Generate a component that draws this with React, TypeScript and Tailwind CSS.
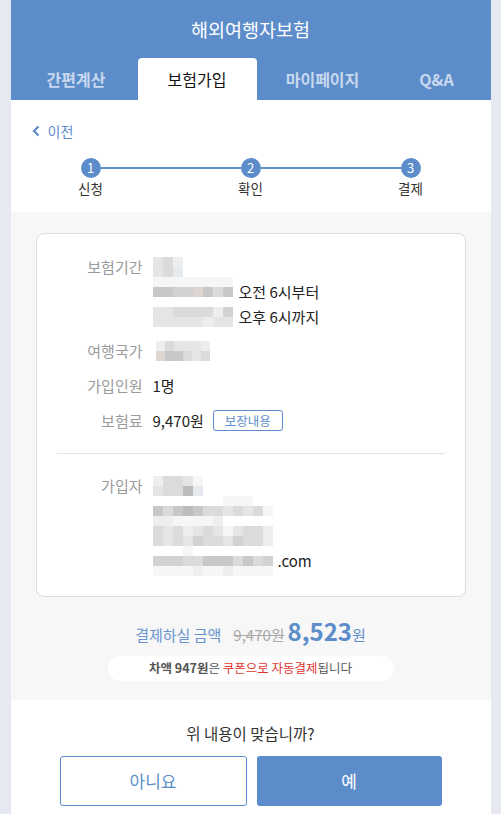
import React from "react";

const PAL: Record<string, string> = {
  w: "bg-transparent",
  "0": "bg-[#f6f6f6]",
  "1": "bg-[#eeeeee]",
  "2": "bg-[#e5e5e6]",
  "3": "bg-[#dbdbdc]",
  "4": "bg-[#d2d2d3]",
  "5": "bg-[#c9c8c9]",
  "6": "bg-[#bdbcbc]",
  "7": "bg-[#e6eaee]",
  "8": "bg-[#ddd5d2]",
};

function Mosaic({ rows, cell = "w-[10px]" }: { rows: string[]; cell?: string }) {
  return (
    <div className="flex flex-col shrink-0">
      {rows.map((r, i) => (
        <div key={i} className="flex h-[10px]">
          {r.split("").map((c, j) => (
            <div key={j} className={`${cell} h-[10px] ${PAL[c]}`} />
          ))}
        </div>
      ))}
    </div>
  );
}

function Label({ children }: { children: React.ReactNode }) {
  return (
    <div className="w-[106px] shrink-0 text-right text-[15px] leading-[20px] text-[#9a9a9a]">
      {children}
    </div>
  );
}

export default function App() {
  const font = { fontFamily: '"Noto Sans CJK KR", "Noto Sans", sans-serif' };
  return (
    <div className="min-h-screen bg-[#e6e9f1] flex justify-center" style={font}>
      <div className="w-[480px] bg-white flex flex-col">
        {/* Header */}
        <div className="bg-[#5c8dca]">
          <div className="h-[58px] flex items-center justify-center text-white text-[18.5px] pt-[1px]">
            해외여행자보험
          </div>
          <div className="h-[42px] grid grid-cols-[127px_119px_132px_102px]">
            <div className="flex items-center justify-center text-[16px] font-bold text-[#c8d8ee] pl-[4px]">간편계산</div>
            <div className="flex items-center justify-center text-[16px] text-[#111111] bg-white rounded-t-[4px]">보험가입</div>
            <div className="flex items-center justify-center text-[16px] font-bold text-[#c8d8ee]">마이페이지</div>
            <div className="flex items-center justify-center text-[16px] font-bold text-[#c8d8ee] pr-[6px]">Q&amp;A</div>
          </div>
        </div>

        {/* Back + steps */}
        <div className="h-[112px] pt-[22px]">
          <div className="flex items-center h-[18px] pl-[21px] gap-[8px] text-[14px] text-[#5c8dca]">
            <svg width="8" height="12" viewBox="0 0 8 12">
              <polyline points="6.5,1.5 2,6 6.5,10.5" fill="none" stroke="#5c8dca" strokeWidth="2.2" />
            </svg>
            <span className="leading-[18px]">이전</span>
          </div>
          <div className="flex items-center px-[70px] mt-[18px]">
            {["1", "2", "3"].map((n, i) => (
              <React.Fragment key={n}>
                {i > 0 && <div className="flex-1 h-[2px] bg-[#5c8dca]" />}
                <div className="w-[20px] h-[20px] rounded-full bg-[#5c8dca] text-white text-[13px] flex items-center justify-center">
                  {n}
                </div>
              </React.Fragment>
            ))}
          </div>
          <div className="flex justify-between px-[60px] mt-[2px]">
            {["신청", "확인", "결제"].map((l) => (
              <div key={l} className="w-[40px] text-center text-[13.5px] leading-[16px] text-[#333333]">
                {l}
              </div>
            ))}
          </div>
        </div>

        {/* Gray section */}
        <div className="bg-[#f7f7f7] pt-[21px] pb-[20px] h-[488px]">
          <div className="mx-[25px] bg-white border border-[#dddddd] rounded-[8px] pt-[23px] pb-[20px]">
            {/* 보험기간 */}
            <div className="flex">
              <Label>보험기간</Label>
              <div className="ml-[10px] flex flex-col">
                <div className="h-[20px]">
                  <Mosaic rows={["231", "237"]} />
                </div>
                <div className="flex items-start h-[25px]">
                  <Mosaic rows={["00000000", "55448535"]} />
                  <span className="ml-[6px] mt-[5px] text-[15px] leading-[20px] text-[#222222]">오전 6시부터</span>
                </div>
                <div className="flex items-end h-[25px]">
                  <Mosaic rows={["22333314", "22222122"]} />
                  <span className="ml-[6px] text-[15px] leading-[20px] text-[#222222]">오후 6시까지</span>
                </div>
              </div>
            </div>
            {/* 여행국가 */}
            <div className="flex mt-[14px]">
              <Label>여행국가</Label>
              <div className="ml-[13px]">
                <Mosaic rows={["132221", "855323"]} cell="w-[9px]" />
              </div>
            </div>
            {/* 가입인원 */}
            <div className="flex mt-[15px]">
              <Label>가입인원</Label>
              <div className="ml-[10px] text-[15px] leading-[20px] text-[#222222]">1명</div>
            </div>
            {/* 보험료 */}
            <div className="flex items-center mt-[14px]">
              <Label>보험료</Label>
              <div className="ml-[10px] text-[15px] leading-[20px] text-[#222222]">9,470원</div>
              <button className="ml-[9px] h-[21px] w-[70px] border border-[#5c8dca] rounded-[3px] text-[12.5px] leading-[19px] text-[#5c8dca] bg-white">
                보장내용
              </button>
            </div>
            <div className="mx-[20px] mt-[22px] h-px bg-[#e3e3e3]" />
            {/* 가입자 */}
            <div className="flex mt-[22px]">
              <Label>가입자</Label>
              <div className="ml-[10px] flex flex-col">
                <Mosaic rows={["13320", "23367"]} />
                <Mosaic
                  rows={[
                    "wwwwwww000ww",
                    "535653323230",
                    "1100001wwwww",
                    "323123202331",
                    "323243324331",
                    "www0wwwwwwww",
                  ]}
                />
                <div className="flex items-start">
                  <Mosaic rows={["444335553534", "000010010000"]} />
                  <span className="ml-[5px] text-[15px] leading-[10px] text-[#222222]">.com</span>
                </div>
              </div>
            </div>
          </div>

          {/* Price */}
          <div className="mt-[19px] flex items-baseline justify-center">
            <span className="text-[15px] text-[#6a95cf]">결제하실 금액</span>
            <span className="ml-[12px] text-[15px] text-[#aaaaaa] line-through">9,470원</span>
            <span className="ml-[3px] text-[24px] font-bold text-[#5c8dca] leading-[30px]">8,523</span>
            <span className="text-[15px] text-[#5c8dca]">원</span>
          </div>
          <div className="mt-[9px] flex justify-center">
            <div className="w-[286px] h-[25px] bg-white rounded-full flex items-center justify-center text-[12.5px] text-[#555555]">
              <span className="font-bold">차액 947원</span>
              <span>은&nbsp;</span>
              <span className="text-[#e3342f]">쿠폰으로 자동결제</span>
              <span>됩니다</span>
            </div>
          </div>
        </div>

        {/* Confirm */}
        <div className="pt-[23px] pb-[8px]">
          <div className="text-center text-[15.5px] leading-[20px] text-[#333333]">위 내용이 맞습니까?</div>
          <div className="mt-[13px] px-[49px] flex gap-[10px]">
            <button className="flex-1 h-[50px] border border-[#5c8dca] rounded-[3px] bg-white text-[17px] text-[#5c8dca]">
              아니요
            </button>
            <button className="flex-1 h-[50px] rounded-[3px] bg-[#5c8dca] text-[17px] text-white">예</button>
          </div>
        </div>
      </div>
    </div>
  );
}
